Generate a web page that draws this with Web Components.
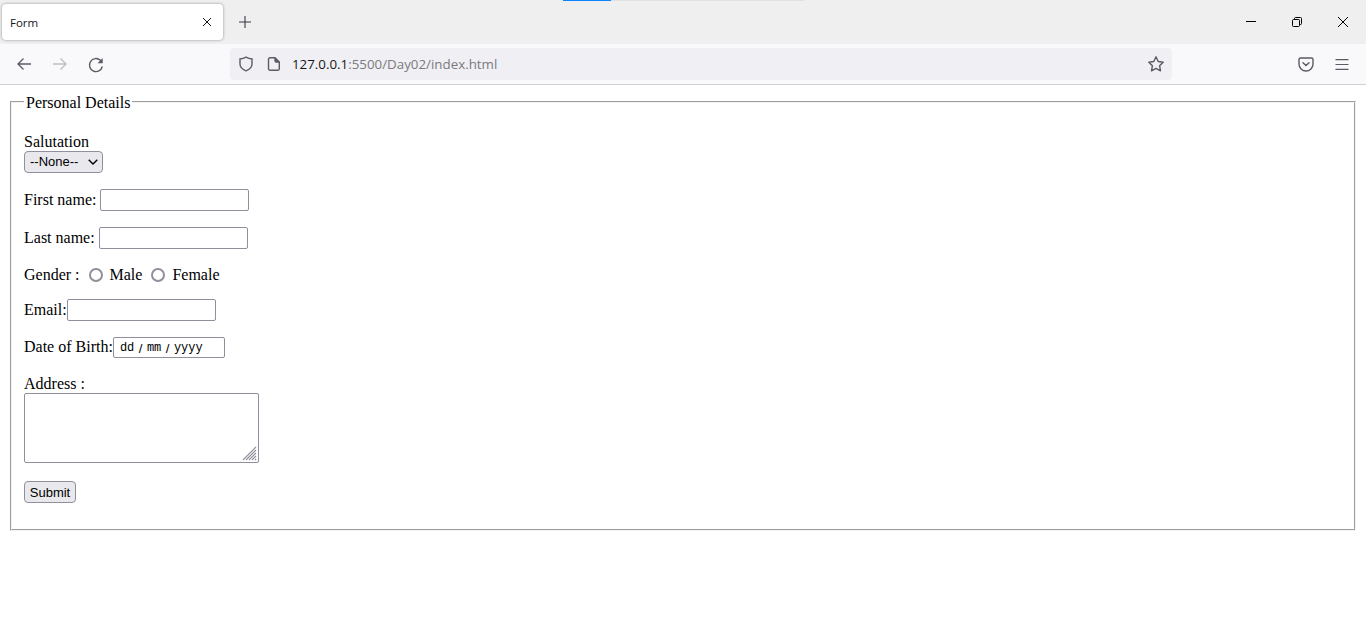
<!DOCTYPE html>
<html lang="en">
<head>
<meta charset="utf-8">
<title>Form</title>
<style>
  html, body { margin: 0; padding: 0; background: #fff; overflow: hidden; }
  body { height: 642px; font-family: "Liberation Serif", serif; font-size: 16px; color: #000; }
</style>
</head>
<body>
<browser-tabstrip title-text="Form"></browser-tabstrip>
<browser-toolbar host-part="127.0.0.1" path-part=":5500/Day02/index.html"></browser-toolbar>
<personal-form></personal-form>

<script>
class BrowserTabstrip extends HTMLElement {
  constructor() {
    super();
    this.attachShadow({ mode: 'open' });
  }

  connectedCallback() {
    const title = this.getAttribute('title-text') || '';
    this.shadowRoot.innerHTML = `
      <style>
        :host { display: block; height: 44px; background: #efefef; position: relative; }
        * { box-sizing: border-box; }
        .progress { position: absolute; top: 0; left: 563px; width: 241px; height: 1px; background: #e0e0e0; }
        .progress i { display: block; width: 48px; height: 1px; background: #0a84ff; }
        .row { display: flex; align-items: flex-start; height: 44px; padding: 4px 0 0 2px; }
        .tab {
          width: 221px; height: 36px; background: #fff; border-radius: 4px;
          box-shadow: 0 0 3px rgba(0,0,0,.4);
          display: flex; align-items: center; justify-content: space-between;
          padding: 0 11px 0 8px;
          font: 11.5px "Open Sans", "Noto Sans", sans-serif; color: #15141a;
        }
        .tab svg { display: block; }
        .new { width: 36px; height: 36px; margin-left: 4px; display: flex; align-items: center; justify-content: center; }
        .win { margin-left: auto; margin-top: -4px; display: flex; }
        .win span { width: 46px; height: 44px; display: flex; align-items: center; justify-content: center; }
      </style>
      <div class="progress"><i></i></div>
      <div class="row">
        <div class="tab">
          <span>${title}</span>
          <svg width="10" height="10" viewBox="0 0 10 10" fill="none" stroke="#15141a" stroke-width="1"><path d="M1 1l8 8M9 1l-8 8"/></svg>
        </div>
        <div class="new">
          <svg width="14" height="14" viewBox="0 0 14 14" fill="none" stroke="#3a3944" stroke-width="1.100"><path d="M7 1v12M1 7h12"/></svg>
        </div>
        <div class="win">
          <span><svg width="10" height="2" viewBox="0 0 10 2"><path d="M0 .5h10" stroke="#000" stroke-width="1"/></svg></span>
          <span><svg width="10" height="10" viewBox="0 0 10 10" fill="none" stroke="#000" stroke-width="1"><rect x=".5" y="2.500" width="7" height="7" rx="1"/><path d="M2.500 2.500V1.500a1 1 0 0 1 1-1h5a1 1 0 0 1 1 1v5a1 1 0 0 1-1 1h-1"/></svg></span>
          <span><svg width="10" height="10" viewBox="0 0 10 10" fill="none" stroke="#000" stroke-width="1"><path d="M0 0l10 10M10 0L0 10"/></svg></span>
        </div>
      </div>`;
  }
}

class BrowserToolbar extends HTMLElement {
  constructor() {
    super();
    this.attachShadow({ mode: 'open' });
  }

  connectedCallback() {
    const host = this.getAttribute('host-part') || '';
    const path = this.getAttribute('path-part') || '';
    this.shadowRoot.innerHTML = `
      <style>
        :host { display: block; height: 41px; background: #f9f9fb; border-bottom: 1px solid #cfcfd8; box-sizing: border-box; }
        * { box-sizing: border-box; }
        .bar { display: flex; align-items: center; height: 40px; padding: 0 6px; }
        .btn { width: 36px; height: 36px; flex: none; display: flex; align-items: center; justify-content: center; }
        svg { display: block; }
        .url {
          flex: 1; height: 32px; margin: 0 116px; background: #f0f0f4; border-radius: 4px;
          display: flex; align-items: center; padding: 0 7px 0 8px;
          font: 13.33px "Open Sans", "Noto Sans", sans-serif; color: #15141a;
        }
        .url .page { margin-left: 13px; }
        .url .text { margin-left: 11px; white-space: nowrap; }
        .url .text em { font-style: normal; color: #7b7a80; }
        .url .star { margin-left: auto; }
        .reload { margin-top: 2px; }
      </style>
      <div class="bar">
        <div class="btn"><svg width="16" height="14" viewBox="0 0 16 14" fill="none" stroke="#5b5b66" stroke-width="1.300"><path d="M15 7H2M7.500 1.500L2 7l5.500 5.500"/></svg></div>
        <div class="btn"><svg width="16" height="14" viewBox="0 0 16 14" fill="none" stroke="#bdbdc3" stroke-width="1.300"><path d="M1 7h13M8.500 1.500L14 7l-5.500 5.500"/></svg></div>
        <div class="btn"><svg class="reload" width="16" height="16" viewBox="0 0 16 16" fill="none" stroke="#5b5b66" stroke-width="1.400"><path d="M14.300 9.500A6.500 6.500 0 1 1 12.400 3.300L14 5.400"/><path d="M14.700 1v5.200H9.500z" fill="#5b5b66" stroke="none"/></svg></div>
        <div class="url">
          <svg width="16" height="16" viewBox="0 0 16 16" fill="none" stroke="#5b5b66" stroke-width="1.400"><path d="M8 1.200c2 1.200 4 1.700 6 1.800v5c0 3.200-2.600 5.500-6 6.800-3.400-1.300-6-3.600-6-6.800V3c2-.1 4-.6 6-1.800z"/></svg>
          <svg class="page" width="14" height="16" viewBox="0 0 14 16" fill="none" stroke="#5b5b66" stroke-width="1.400"><path d="M3 1.700h5l4.300 4.300v6.800a1.500 1.500 0 0 1-1.500 1.500H3a1.500 1.500 0 0 1-1.500-1.500V3.200A1.500 1.500 0 0 1 3 1.700z"/><path d="M8 1.700v3a1.300 1.300 0 0 0 1.300 1.300h3" fill="#5b5b66"/></svg>
          <span class="text">${host}<em>${path}</em></span>
          <svg class="star" width="18" height="18" viewBox="0 0 18 18" fill="none" stroke="#5b5b66" stroke-width="1.400" stroke-linejoin="round"><path d="M9 1.800l2.200 4.700 5 .7-3.600 3.500.9 5.100L9 13.400l-4.500 2.400.9-5.100L1.800 7.200l5-.7z"/></svg>
        </div>
        <div class="btn"><svg width="16" height="15" viewBox="0 0 16 15" fill="none" stroke="#5b5b66" stroke-width="1.400"><path d="M2.500 1h11A1.500 1.500 0 0 1 15 2.500V7a7 7 0 0 1-14 0V2.500A1.500 1.500 0 0 1 2.500 1z"/><path d="M5 5.800l3 2.800 3-2.800" stroke-linecap="round"/></svg></div>
        <div class="btn"><svg width="14" height="11" viewBox="0 0 14 11" fill="none" stroke="#5b5b66" stroke-width="1.200"><path d="M.5 .6h13M.5 5.500h13M.5 10.400h13"/></svg></div>
      </div>`;
  }
}

class FormRow extends HTMLElement {
  constructor() {
    super();
    this.attachShadow({ mode: 'open' });
    this.shadowRoot.innerHTML = `
      <style>
        :host { display: block; margin: 16px 0; }
      </style>
      <slot></slot>`;
  }
}

class DateField extends HTMLElement {
  constructor() {
    super();
    this.attachShadow({ mode: 'open' });
    this.shadowRoot.innerHTML = `
      <style>
        :host {
          display: inline-flex; align-items: center; box-sizing: border-box;
          width: 112px; height: 21px; padding: 2px 0 0 6px; background: #fff;
          border: 1px solid #8f8f9d; border-radius: 2px;
          font: 12px "Liberation Mono", "DejaVu Sans Mono", monospace; color: #000;
        }
        i { font: normal 13.33px "Liberation Sans", sans-serif; width: 12.6px; text-align: center; }
      </style>
      <span>dd</span><i>/</i><span>mm</span><i>/</i><span>yyyy</span>`;
  }
}

class PersonalForm extends HTMLElement {
  constructor() {
    super();
    this.attachShadow({ mode: 'open' });
    this.shadowRoot.innerHTML = `
      <style>
        :host { display: block; margin: 6px 8px 8px; }
        * { box-sizing: border-box; }
        fieldset { margin: 0 2px; padding: 4.6px 12px 10px; border: 2px groove #f2f2f2; min-width: 0; }
        legend { padding: 3px 2px 0; }
        input, select, button, textarea { margin: 0; font: 13px "Liberation Sans", sans-serif; color: #000; }
        .text { width: 149px; height: 22px; padding: 1px 2px; border: 1px solid #8f8f9d; border-radius: 2px; background: #fff; outline: none; }
        .select-wrap { display: inline-block; position: relative; vertical-align: top; height: 22px; }
        select {
          appearance: none; -webkit-appearance: none; display: block; width: 79px; height: 22px;
          padding: 0 0 0 5px; background: #e9e9ed; border: 1px solid #8f8f9d; border-radius: 4px;
        }
        .select-wrap svg { position: absolute; right: 5px; top: 8px; pointer-events: none; }
        .radio {
          appearance: none; -webkit-appearance: none; width: 14px; height: 14px; margin: 0 3px 0 5px;
          border: 2px solid #8f8f9d; border-radius: 50%; background: #fff; vertical-align: -2px;
        }
        .gender { height: 18px; line-height: 20px; }
        .dob { display: flex; align-items: center; height: 21px; margin-bottom: 17px; }
        .area-wrap { position: relative; display: inline-block; vertical-align: top; width: 235px; height: 70px; margin-bottom: 2px; }
        textarea { display: block; width: 235px; height: 70px; resize: none; border: 1px solid #8f8f9d; border-radius: 2px; outline: none; background: #fff; }
        .area-wrap svg { position: absolute; right: 2px; bottom: 2px; }
        button { display: block; width: 52px; height: 22px; padding: 1px 0 0; background: #e9e9ed; border: 1px solid #8f8f9d; border-radius: 4px; }
      </style>
      <fieldset>
        <legend>Personal Details</legend>
        <form-row>
          <label for="sal">Salutation</label><br>
          <span class="select-wrap">
            <select id="sal"><option>--None--</option><option>Mr.</option><option>Ms.</option></select>
            <svg width="10" height="6" viewBox="0 0 10 6" fill="none" stroke="#000" stroke-width="1.400"><path d="M.7 .7L5 5l4.300-4.300"/></svg>
          </span>
        </form-row>
        <form-row><label for="fn">First name:</label> <input class="text" id="fn" type="text"></form-row>
        <form-row><label for="ln">Last name:</label> <input class="text" id="ln" type="text"></form-row>
        <form-row class="gender">Gender : <input class="radio" type="radio" name="gender" id="m"> <label for="m">Male</label> <input class="radio" type="radio" name="gender" id="f"> <label for="f">Female</label></form-row>
        <form-row><label for="em">Email:</label><input class="text" id="em" type="text"></form-row>
        <form-row class="dob"><label>Date of Birth:</label><date-field></date-field></form-row>
        <form-row>
          <label for="ad">Address :</label><br>
          <span class="area-wrap">
            <textarea id="ad"></textarea>
            <svg width="15" height="15" viewBox="0 0 15 15" fill="none" stroke="#8f8f9d" stroke-width="1.100"><path d="M1 14L14 1M4 14L14 4M7 14l7-7M10 14l4-4M13 14l1-1"/></svg>
          </span>
        </form-row>
        <form-row><button type="button">Submit</button></form-row>
      </fieldset>`;
  }
}

customElements.define('browser-tabstrip', BrowserTabstrip);
customElements.define('browser-toolbar', BrowserToolbar);
customElements.define('form-row', FormRow);
customElements.define('date-field', DateField);
customElements.define('personal-form', PersonalForm);
</script>
</body>
</html>
